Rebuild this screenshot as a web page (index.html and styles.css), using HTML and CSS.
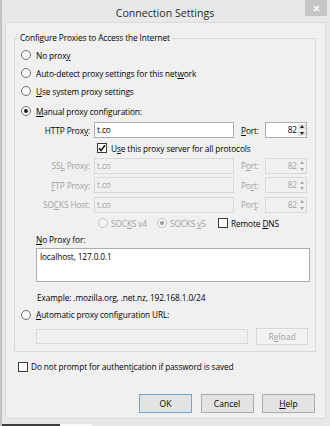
FILE: index.html
```html
<!DOCTYPE html>
<html lang="en">
<head>
  <meta charset="UTF-8">
  <meta name="viewport" content="width=device-width, initial-scale=1.0">
  <title>Connection Settings</title>
  <link rel="stylesheet" href="styles.css">
</head>
<body>
  <div class="window">
    <div class="titlebar">
      <span></span>
      <span class="title">Connection Settings</span>
      <span class="close">
        <svg width="7" height="7" viewBox="0 0 7 7"><path d="M1 1L6 6M6 1L1 6" stroke="#fff" stroke-width="1.5"/></svg>
      </span>
    </div>

    <div class="pane">
      <fieldset class="group">
        <legend>Configure Proxies to Access the Internet</legend>

        <div class="options">
          <div class="opt"><span class="radio"></span><span>No prox<u>y</u></span></div>
          <div class="opt"><span class="radio"></span><span>Auto-detect proxy settings for this net<u>w</u>ork</span></div>
          <div class="opt"><span class="radio"></span><span><u>U</u>se system proxy settings</span></div>
          <div class="opt manual"><span class="radio checked"></span><span><u>M</u>anual proxy configuration:</span></div>
        </div>

        <div class="proxy-row first">
          <span class="plabel">HTTP Prox<u>y</u>:</span>
          <span class="field">t.co</span>
          <span class="portlabel"><u>P</u>ort:</span>
          <span class="port"><span class="num">82</span><span class="spin"><i class="up"></i><i class="down"></i></span></span>
        </div>

        <div class="share-row">
          <span class="check"><svg width="8" height="8" viewBox="0 0 8 8"><path d="M1 4.2L3 6.4L7 1.3" fill="none" stroke="#1a1a1a" stroke-width="1.6"/></svg></span>
          <span>U<u>s</u>e this proxy server for all protocols</span>
        </div>

        <div class="proxy-row off">
          <span class="plabel">SS<u>L</u> Proxy:</span>
          <span class="field">t.co</span>
          <span class="portlabel">P<u>o</u>rt:</span>
          <span class="port"><span class="num">82</span><span class="spin"><i class="up"></i><i class="down"></i></span></span>
        </div>
        <div class="proxy-row off">
          <span class="plabel"><u>F</u>TP Proxy:</span>
          <span class="field">t.co</span>
          <span class="portlabel">Po<u>r</u>t:</span>
          <span class="port"><span class="num">82</span><span class="spin"><i class="up"></i><i class="down"></i></span></span>
        </div>
        <div class="proxy-row off">
          <span class="plabel">SO<u>C</u>KS Host:</span>
          <span class="field">t.co</span>
          <span class="portlabel">Por<u>t</u>:</span>
          <span class="port"><span class="num">82</span><span class="spin"><i class="up"></i><i class="down"></i></span></span>
        </div>

        <div class="socks-row">
          <span class="socks-opt v4 off"><span class="radio"></span><span>SOC<u>K</u>S v4</span></span>
          <span class="socks-opt v5 off"><span class="radio checked"></span><span>SOCKS <u>v</u>5</span></span>
          <span class="socks-opt"><span class="check"></span><span>Remote <u>D</u>NS</span></span>
        </div>

        <div class="noproxy-label"><u>N</u>o Proxy for:</div>
        <div class="textarea">localhost, 127.0.0.1</div>
        <div class="example">Example: .mozilla.org, .net.nz, 192.168.1.0/24</div>

        <div class="opt auto"><span class="radio"></span><span><u>A</u>utomatic proxy configuration URL:</span></div>
        <div class="url-row">
          <span class="field url"></span>
          <button class="btn reload" disabled>R<u>e</u>load</button>
        </div>
      </fieldset>

      <div class="auth-row"><span class="check"></span><span>Do not prompt for authent<u>i</u>cation if password is saved</span></div>

      <div class="buttons">
        <button class="btn default">OK</button>
        <button class="btn">Cancel</button>
        <button class="btn"><u>H</u>elp</button>
      </div>
    </div>

    <div class="frame-bottom">
      <span class="task-dark"></span>
      <span class="task-light"></span>
    </div>
  </div>
</body>
</html>
```

FILE: styles.css
```css
body {
  margin: 0;
  background-color: #e8e8e8;
  font-family: 'Open Sans', 'Noto Sans', sans-serif;
  font-size: 8.3px;
  font-weight: 500;
  letter-spacing: -0.12px;
  color: #000;
}
u {
  text-underline-offset: 1px;
}
.window {
  width: 330px;
  height: 426px;
  box-sizing: border-box;
  border-left: 2px solid #c2c2c2;
  display: flex;
  flex-direction: column;
}

/* title bar */
.titlebar {
  height: 22px;
  flex: none;
  display: grid;
  grid-template-columns: 1fr auto 1fr;
  align-items: start;
}
.title {
  font-size: 10.6px;
  font-weight: 400;
  letter-spacing: 0;
  line-height: 14px;
  padding-top: 6px;
  color: #2b2b2b;
  margin-left: -2px;
}
.close {
  justify-self: end;
  margin-right: 3px;
  width: 22px;
  height: 16px;
  background-color: #c6c6c6;
  display: flex;
  align-items: center;
  justify-content: center;
}

/* dialog body */
.pane {
  height: 397px;
  flex: none;
  box-sizing: border-box;
  margin: 0 4px 0 3px;
  border: 1px solid #dadada;
  background-color: #f0f0f0;
}
.group {
  margin: 9px 9px 0 8px;
  padding: 0 0 6px 0;
  border: 1px solid #d9d9d9;
}
.group legend {
  margin-left: 3px;
  padding: 0 2px;
  line-height: 12px;
}
.options {
  padding-top: 2px;
}
.opt {
  height: 18px;
  display: flex;
  align-items: center;
  gap: 5px;
  padding-left: 6px;
}
.opt.manual {
  margin-top: 2px;
}

/* radio + checkbox */
.radio {
  width: 10px;
  height: 10px;
  flex: none;
  box-sizing: border-box;
  border: 1px solid #6f6f6f;
  border-radius: 50%;
  background-color: #fafafa;
  display: flex;
  align-items: center;
  justify-content: center;
}
.radio.checked::after {
  content: '';
  width: 4px;
  height: 4px;
  border-radius: 50%;
  background-color: #1a1a1a;
}
.check {
  width: 10px;
  height: 10px;
  flex: none;
  box-sizing: border-box;
  border: 1px solid #3a3a3a;
  background-color: #fff;
  display: flex;
  align-items: center;
  justify-content: center;
}

/* proxy rows */
.proxy-row {
  height: 19.5px;
  display: flex;
  align-items: center;
}
.proxy-row.first {
  height: 20px;
}
.plabel {
  width: 75px;
  text-align: right;
  margin-right: 4px;
}
.field {
  width: 140px;
  height: 16px;
  box-sizing: border-box;
  border: 1px solid #abadb3;
  background-color: #fff;
  padding-left: 2px;
  line-height: 14px;
}
.portlabel {
  width: 24px;
  margin-left: 7px;
}
.port {
  width: 42px;
  height: 16px;
  box-sizing: border-box;
  border: 1px solid #abadb3;
  background-color: #fff;
  display: flex;
}
.num {
  flex: 1;
  text-align: right;
  line-height: 14px;
  padding-right: 1px;
}
.spin {
  width: 8px;
  display: flex;
  flex-direction: column;
  gap: 1px;
  padding: 1px 0;
}
.spin i {
  flex: 1;
  background-color: #e4e4e4;
  display: flex;
  align-items: center;
  justify-content: center;
}
.spin .up::after {
  content: '';
  border: 2.5px solid transparent;
  border-top: 0;
  border-bottom: 3px solid #222;
}
.spin .down::after {
  content: '';
  border: 2.5px solid transparent;
  border-bottom: 0;
  border-top: 3px solid #222;
}
.off {
  color: #a0a0a0;
}
.off .field,
.off .port,
.field.url {
  background-color: #f0f0f0;
  border-color: #d8d8d8;
}
.off .spin i {
  background-color: #f0f0f0;
}
.off .spin .up::after {
  border-bottom-color: #a8a8a8;
}
.off .spin .down::after {
  border-top-color: #a8a8a8;
}

.share-row {
  height: 16px;
  display: flex;
  align-items: center;
  gap: 4px;
  padding-left: 82px;
}

/* socks */
.socks-row {
  height: 17px;
  display: flex;
  align-items: center;
  padding-left: 83px;
}
.socks-opt {
  display: flex;
  align-items: center;
  gap: 3px;
  white-space: nowrap;
}
.socks-opt.v4 {
  width: 59px;
}
.socks-opt.v5 {
  width: 61px;
}
.off .radio {
  border-color: #c2c2c2;
  background-color: #f4f4f4;
}
.off .radio.checked::after {
  background-color: #9a9a9a;
}

.noproxy-label {
  height: 15px;
  line-height: 15px;
  padding-left: 21px;
}
.textarea {
  margin: 1px 0 0 21px;
  width: 274px;
  height: 34px;
  box-sizing: border-box;
  border: 1px solid #abadb3;
  background-color: #fff;
  padding: 2px 3px;
}
.example {
  margin-top: 8px;
  height: 16px;
  line-height: 16px;
  padding-left: 22px;
}
.url-row {
  margin-top: 4px;
  display: flex;
  align-items: center;
  gap: 8px;
  padding-left: 21px;
}
.field.url {
  width: 212px;
  height: 15px;
}

/* buttons */
.btn {
  font-family: inherit;
  font-size: 8.5px;
  font-weight: 500;
  color: #000;
  width: 53px;
  height: 19px;
  padding: 0;
  border: 1px solid #acacac;
  background-color: #e3e3e3;
}
.btn.default {
  border-color: #6ea5dc;
}
.btn.reload {
  width: 52px;
  height: 17px;
  color: #a0a0a0;
  background-color: #f2f2f2;
  border-color: #d6d6d6;
}

.auth-row {
  margin-top: 7px;
  height: 16px;
  display: flex;
  align-items: center;
  gap: 3px;
  padding-left: 12px;
}
.buttons {
  margin-top: 19px;
  display: flex;
  justify-content: flex-end;
  gap: 8.5px;
  padding-right: 10px;
}

/* frame below the dialog */
.frame-bottom {
  flex: 1;
  display: flex;
  align-items: flex-end;
}
.task-dark {
  width: 58px;
  height: 2px;
  background-color: #3b3f44;
}
.task-light {
  width: 32px;
  height: 2px;
  background-color: #fafafa;
}
```
